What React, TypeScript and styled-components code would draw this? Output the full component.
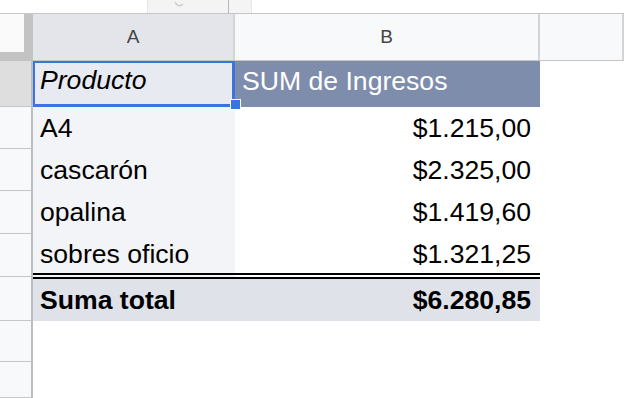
import React from "react";
import styled, { createGlobalStyle, css } from "styled-components";

const GlobalStyle = createGlobalStyle`
  html, body {
    margin: 0;
    padding: 0;
    background: #fff;
    overflow: hidden;
  }
  body {
    font-family: "Liberation Sans", Arial, Helvetica, sans-serif;
  }
`;

type Tone = "sel" | "head" | "label" | "value" | "total" | "plain";

interface Row {
  name: string;
  value: string;
  height: number;
  pb: number;
}

const data: Row[] = [
  { name: "A4", value: "$1.215,00", height: 42, pb: 8 },
  { name: "cascarón", value: "$2.325,00", height: 42, pb: 8 },
  { name: "opalina", value: "$1.419,60", height: 43, pb: 9 },
  { name: "sobres oficio", value: "$1.321,25", height: 43, pb: 10 },
];

const toneBg: Record<Tone, string> = {
  sel: "#e7eaf0",
  head: "#7f8dac",
  label: "#f3f4f7",
  value: "#ffffff",
  total: "#dfe2e9",
  plain: "#ffffff",
};

/** Spreadsheet view with a small pivot table. */
export default function App() {
  return (
    <>
      <GlobalStyle />
      <Page>
        <TopBar>
          <ToolGroup>
            <svg width="14" height="13" viewBox="0 0 14 13">
              <path d="M3 2 C 5 6, 8 7, 11 4" fill="none" stroke="#c9c9c9" strokeWidth="1.4" />
            </svg>
            <ToolDivider />
          </ToolGroup>
        </TopBar>

        <Sheet>
          <Corner>
            <CornerBox />
          </Corner>
          <ColHead $active>A</ColHead>
          <ColHead>B</ColHead>
          <ColHead />

          <RowHead $active />
          <Cell $tone="sel" $italic $pb={14}>
            Producto
            <FillHandle />
          </Cell>
          <Cell $tone="head" $pb={13}>
            SUM de Ingresos
          </Cell>
          <Cell $tone="plain" />

          {data.map((r) => (
            <React.Fragment key={r.name}>
              <RowHead />
              <Cell $tone="label" $pb={r.pb}>
                {r.name}
              </Cell>
              <Cell $tone="value" $align="right" $pb={r.pb}>
                {r.value}
              </Cell>
              <Cell $tone="plain" />
            </React.Fragment>
          ))}

          <RowHead />
          <Cell $tone="total" $bold $pb={8}>
            Suma total
          </Cell>
          <Cell $tone="total" $bold $align="right" $pb={8}>
            $6.280,85
          </Cell>
          <Cell $tone="plain" />

          <RowHead />
          <Cell $tone="plain" />
          <Cell $tone="plain" />
          <Cell $tone="plain" />

          <RowHead />
          <Cell $tone="plain" />
          <Cell $tone="plain" />
          <Cell $tone="plain" />
        </Sheet>
      </Page>
    </>
  );
}

const Page = styled.div`
  width: 624px;
  height: 398px;
  display: flex;
  flex-direction: column;
  background: #fff;
`;

const TopBar = styled.div`
  height: 13px;
  flex: none;
  display: flex;
  padding-left: 147px;
  border-bottom: 1px solid #c6c6c6;
`;

const ToolGroup = styled.div`
  width: 105px;
  height: 13px;
  display: flex;
  align-items: flex-end;
  padding-left: 24px;
  box-sizing: border-box;
  background: #f4f4f4;
  border-left: 1px solid #e6e6e6;
  border-right: 1px solid #e6e6e6;
`;

const ToolDivider = styled.span`
  width: 1px;
  height: 13px;
  margin-left: 42px;
  background: #b8b8b8;
`;

const Sheet = styled.div`
  flex: 1;
  display: grid;
  grid-template-columns: 33px 202px 305px 1fr;
  grid-template-rows: 47px 46px 42px 42px 43px 43px 44px 41px 1fr;
  overflow: hidden;
`;

const Corner = styled.div`
  background: #c3c3c3;
`;

const CornerBox = styled.div`
  width: 24px;
  height: 38px;
  background: #fafafa;
`;

const ColHead = styled.div<{ $active?: boolean }>`
  display: flex;
  align-items: center;
  justify-content: center;
  font-size: 19px;
  color: #444;
  background: ${(p) => (p.$active ? "#e3e5ea" : "#f8f9fa")};
  border-right: 2px solid #d4d4d4;
  border-bottom: 1px solid #c4c4c4;
`;

const RowHead = styled.div<{ $active?: boolean }>`
  background: ${(p) => (p.$active ? "#dedede" : "#f8f9fa")};
  border-right: 2px solid #bdbdbd;
  border-bottom: 1px solid #c6c6c6;
`;

const Cell = styled.div<{
  $tone: Tone;
  $align?: "left" | "right";
  $pb?: number;
  $bold?: boolean;
  $italic?: boolean;
}>`
  position: relative;
  display: flex;
  align-items: flex-end;
  justify-content: ${(p) => (p.$align === "right" ? "flex-end" : "flex-start")};
  padding: 0 9px ${(p) => p.$pb ?? 0}px 7px;
  font-size: 26.6px;
  line-height: 26px;
  white-space: nowrap;
  color: ${(p) => (p.$tone === "head" ? "#fff" : "#000")};
  font-weight: ${(p) => (p.$bold ? 700 : 400)};
  font-style: ${(p) => (p.$italic ? "italic" : "normal")};
  background: ${(p) => toneBg[p.$tone]};

  ${(p) =>
    p.$tone === "sel" &&
    css`
      box-shadow: inset 2px 2px 0 0 #3a74dc, inset -3px -3px 0 0 #3a74dc;
    `}

  ${(p) =>
    p.$tone === "total" &&
    css`
      &::before {
        content: "";
        position: absolute;
        left: 0;
        right: 0;
        top: -4px;
        height: 2px;
        border-top: 2px solid #000;
        border-bottom: 2px solid #000;
      }
    `}
`;

const FillHandle = styled.span`
  position: absolute;
  right: -6px;
  bottom: -3px;
  z-index: 2;
  width: 9px;
  height: 9px;
  background: #3a74dc;
  border: 1px solid #fff;
`;
